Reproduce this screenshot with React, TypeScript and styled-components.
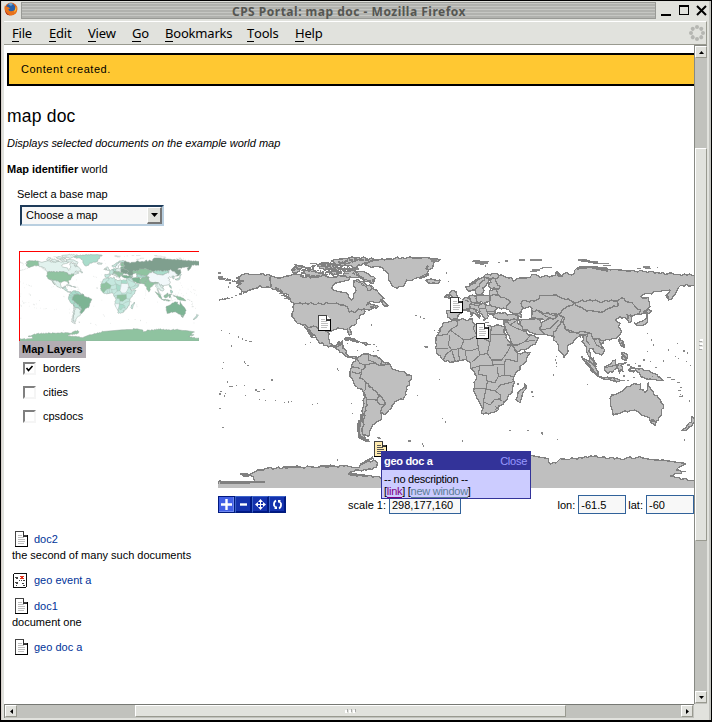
import React from "react";
import styled, { createGlobalStyle, css } from "styled-components";

const Global = createGlobalStyle`
  *{box-sizing:border-box}
  html,body,#root{margin:0;width:712px;height:722px;overflow:hidden}
  body{font:11px/14px "Liberation Sans",Arial,sans-serif;color:#000;background:#fff}
  svg{display:block;flex:none}
`;

/* ---------- world geometry: points in thirds of a map pixel ---------- */
type Land = { at: [number, number]; p: string; tint?: string };
const AM: [number, number] = [210, 245];
const EA: [number, number] = [430, 245];
const SO: [number, number] = [330, 360];
const SW: [number, number] = [210, 340];
const green = "#8fc3a0", deep = "#7db494", dark = "#7f9f8e", mint = "#a9dccb", pale = "#e2f2ee", ice = "#f1f8fa", soft = "#c5e8df";

const lands: Land[] = [
  { at: AM, tint: green, p: "80,125 88,118 78,110 100,108 80,98 95,90 110,85 150,88 182,92 182,128 165,128 150,122 138,130 120,135 105,142 90,130" },
  { at: AM, tint: pale, p: "182,92 215,98 240,92 265,88 285,98 320,98 345,92 372,96 385,92 420,98 415,106 395,110 370,120 365,130 385,140 415,148 418,160 424,165 430,148 438,136 430,122 432,108 444,102 470,122 484,122 490,134 505,142 512,150 522,160 500,172 480,170 470,180 490,180 505,185 485,192 462,192 440,198 418,202 412,185 400,180 372,176 255,176 240,165 228,145 205,135 182,128" },
  { at: AM, tint: green, p: "255,176 372,176 400,180 412,185 418,202 440,198 462,192 465,200 450,210 440,225 440,235 420,248 418,250 425,268 418,270 412,252 390,250 370,255 352,260 345,257 330,248 318,245 290,244 275,238 262,235 252,220 246,205 248,185" },
  { at: AM, tint: pale, p: "275,238 290,244 318,245 330,248 345,258 352,260 356,280 365,298 380,300 385,290 398,288 395,298 380,305 370,306 350,302 325,288 315,270 300,256 290,250 312,278 300,270 285,248" },
  { at: AM, tint: soft, p: "370,306 382,304 396,296 398,310 410,318 412,330 425,338 440,336 432,342 415,338 400,325 385,314" },
  { at: AM, tint: mint, p: "455,52 480,50 500,45 540,42 600,36 640,38 690,44 670,52 668,70 655,75 655,90 640,98 615,100 590,105 577,125 562,130 545,120 535,95 528,78 510,66 475,62" },
  { at: AM, tint: pale, p: "400,75 440,80 470,85 495,100 490,115 465,110 450,95 420,96 400,90" },
  { at: AM, tint: pale, p: "275,84 310,72 330,85 345,92 300,95" },
  { at: AM, tint: pale, p: "365,48 420,38 492,42 460,55 430,68 412,62 380,62" },
  { at: AM, tint: pale, p: "245,75 258,62 280,66 268,80 250,84" },
  { at: AM, tint: pale, p: "322,60 345,54 372,60 398,72 362,74 330,70" },
  { at: AM, tint: pale, p: "350,80 378,76 388,84 368,92" },
  { at: AM, p: "466,124 480,120 486,130 474,136" },
  { at: AM, p: "648,106 665,102 690,105 688,112 665,115" },
  { at: AM, p: "402,282 420,279 448,290 435,289 420,284" },
  { at: AM, p: "452,293 468,292 482,299 466,301" },
  { at: AM, p: "514,170 524,170 535,182 520,182" },
  { at: EA, tint: dark, p: "195,100 215,90 245,98 250,108 262,100 300,98 305,90 340,95 375,92 380,80 395,95 410,82 425,90 440,70 490,65 540,75 600,78 660,80 690,85 740,88 793,92 806,98 806,120 793,122 770,118 745,128 735,150 715,165 708,150 720,135 690,140 640,148 632,155 655,158 660,185 640,205 622,208 632,195 612,180 575,158 560,168 520,170 480,165 435,172 400,160 370,150 330,152 320,165 275,170 280,190 265,205 240,200 228,192 242,172 215,158 205,150 200,135 210,125" },
  { at: EA, tint: soft, p: "108,125 125,118 140,105 165,90 195,85 215,90 195,100 165,98 150,115 135,135 115,138" },
  { at: EA, tint: ice, p: "135,135 150,115 165,98 178,105 170,118 158,128 162,138 150,150 140,148" },
  { at: EA, tint: green, p: "178,105 195,100 210,125 200,132 182,132 176,122 184,112" },
  { at: EA, tint: soft, p: "84,166 100,162 112,158 125,168 120,190 105,195 85,195 92,178" },
  { at: EA, tint: mint, p: "112,158 120,152 140,152 145,160 140,175 125,172" },
  { at: EA, tint: pale, p: "140,152 180,152 182,170 160,175 140,168" },
  { at: EA, tint: deep, p: "178,138 200,135 205,150 180,154" },
  { at: EA, tint: soft, p: "50,198 85,198 98,202 85,210 82,220 65,224 52,218" },
  { at: EA, tint: pale, p: "58,160 68,154 58,144 66,136 78,140 80,150 90,160 70,164" },
  { at: EA, p: "43,158 48,150 58,150 56,160" },
  { at: EA, tint: dark, p: "182,152 205,150 215,158 242,172 228,192 200,190 180,180" },
  { at: EA, tint: green, p: "125,172 160,175 180,180 200,190 195,205 180,207 172,204 175,215 165,222 158,214 150,205 135,192 120,188" },
  { at: EA, p: "108,196 120,190 132,192 140,202 152,212 148,220 135,206 118,198" },
  { at: EA, tint: deep, p: "188,209 215,205 250,208 265,215 262,225 235,225 200,220" },
  { at: EA, tint: soft, p: "240,200 265,205 275,215 265,215 250,208" },
  { at: EA, tint: green, p: "275,170 320,165 330,152 370,150 400,160 435,172 425,182 405,190 395,205 360,208 340,205 320,195 305,198 300,185 285,190 275,182" },
  { at: EA, tint: mint, p: "305,198 320,195 340,205 360,208 385,208 370,222 345,228 330,222 305,218" },
  { at: EA, tint: deep, p: "262,215 275,225 300,222 325,222 335,235 330,255 345,268 320,268 300,262 285,255 270,240" },
  { at: EA, tint: green, p: "335,235 345,228 370,222 385,208 400,215 390,240 370,262 372,275 345,268 330,255" },
  { at: EA, tint: mint, p: "435,172 480,165 520,170 560,168 565,180 545,188 510,202 470,198 445,185" },
  { at: EA, tint: ice, p: "435,172 445,185 470,198 510,202 545,188 565,180 560,168 575,158 612,180 632,195 622,208 600,210 590,222 570,215 555,225 570,235 565,245 575,260 565,275 540,285 520,288 505,280 490,282 475,262 450,260 430,262 405,252 400,215 385,208 405,190 425,182" },
  { at: EA, tint: green, p: "400,215 405,252 430,262 450,260 475,262 465,270 445,275 432,285 412,305 412,325 402,338 390,320 382,295 370,285 372,275 370,262 390,240" },
  { at: EA, tint: pale, p: "465,270 475,262 490,282 505,280 520,288 512,298 525,315 515,330 500,326 490,312 480,310 482,335 492,348 497,364 484,352 474,330 470,305 455,290" },
  { at: EA, tint: soft, p: "590,208 602,212 605,230 597,232" },
  { at: EA, tint: soft, p: "612,234 638,228 652,210 652,232 628,242" },
  { at: EA, tint: soft, p: "646,196 664,198 653,207" },
  { at: EA, tint: soft, p: "228,225 262,225 270,240 290,264 305,270 325,278 315,298 290,312 262,320 250,300 232,265 222,240" },
  { at: EA, tint: soft, p: "45,232 80,225 128,222 135,238 160,245 195,242 225,245 222,262 240,292 256,318 264,325 300,322 290,342 262,378 252,395 250,420 245,445 222,470 215,480 190,503 160,508 145,465 132,430 140,395 122,368 120,352 100,345 60,352 40,345 20,322 18,285 30,250" },
  { at: SO, tint: soft, p: "564,96 578,86 585,72 587,88 570,128 558,118" },
  { at: EA, tint: green, p: "525,365 545,352 556,345 562,362 548,382 528,380" },
  { at: EA, tint: green, p: "455,334 478,350 500,374 508,395 488,382 470,358" },
  { at: SO, tint: green, p: "806,50 840,54 870,60 868,65 822,58" },
  { at: SO, tint: green, p: "865,10 888,8 872,16 882,36 872,30 868,40 863,24" },
  { at: SO, tint: green, p: "900,18 918,26 960,34 984,50 1000,62 974,58 954,58 932,50 920,34" },
  { at: EA, tint: mint, p: "568,278 580,290 584,308 574,302" },
  { at: EA, tint: mint, p: "575,322 592,330 590,345 576,340" },
  { at: SO, tint: deep, p: "840,115 845,105 880,90 905,75 932,72 930,88 946,98 955,68 965,90 985,115 1000,135 995,165 985,180 960,182 950,170 935,165 920,154 900,152 870,160 850,165 845,145" },
  { at: SO, tint: deep, p: "960,186 980,186 975,198" },
  { at: SO, tint: soft, p: "1056,212 1072,195 1084,186 1086,170 1100,178 1088,192 1066,212" },
  { at: SW, tint: mint, p: "425,75 440,55 455,45 475,42 500,48 515,62 540,72 515,75 490,70 465,75 455,98 450,115 468,128 460,155 440,140 425,115 420,95" },
  { at: SW, tint: deep, p: "465,75 490,70 515,75 540,72 548,88 580,95 605,108 605,118 590,140 588,165 580,178 555,185 545,205 525,225 512,215 525,195 515,170 490,150 468,128 450,115 455,98" },
  { at: SW, tint: mint, p: "468,128 490,150 515,170 525,195 508,192 500,180 470,178 460,155" },
  { at: SW, tint: pale, p: "470,178 500,180 508,192 525,195 512,215 515,238 495,250 480,270 475,290 460,285 455,270 462,235" },
  { at: SW, tint: ice, p: "460,155 470,178 462,235 455,270 460,285 475,300 460,300 445,290 448,265 456,240 462,190" },
  { at: SW, tint: green, p: "24,425 85,428 135,425 130,410 96,405 125,400 165,386 245,382 330,380 400,378 440,382 465,368 490,360 502,368 498,382 470,390 445,390 430,395 415,402 450,406 480,406 530,418 600,395 700,368 850,355 960,348 1015,357 1022,372 1060,357 1150,350 1230,356 1290,350 1360,360 1428,372 1398,390 1425,395 1382,408 1452,422 1464,422 1464,446 24,446" },
];

const africaBorders = "80,225 84,240 60,255 52,268 22,272 M60,255 102,285 120,283 140,272 130,250 134,238 M140,272 180,290 184,244 M180,268 228,270 M180,290 172,325 185,345 215,345 230,325 244,298 M102,285 92,310 65,315 55,300 60,270 M92,310 105,315 110,345 M140,272 145,310 120,318 105,315 M145,310 150,330 172,325 M150,330 125,352 M185,345 190,360 222,358 228,342 M228,342 262,350 262,325 M190,360 150,362 125,370 M150,362 145,388 168,392 172,410 195,412 205,395 202,365 M222,358 225,390 205,395 M225,390 252,395 M134,430 168,432 172,410 M168,432 195,438 212,420 250,410 M168,432 160,470 180,480 195,462 212,465 212,450 195,438 M160,470 160,492 M18,310 55,310 M40,345 48,328 65,315 M65,315 76,350 M85,312 88,346 M205,460 216,468 M195,485 204,488 196,494";
const asiaBorders = "120,178 145,182 160,175 M145,182 150,200 M165,178 170,200 M170,200 195,198 M150,190 165,192 M105,165 118,170 M118,152 122,170 M228,225 240,240 262,225 M240,240 260,250 290,262 M232,300 262,300 285,290 315,285 M285,290 300,272 M330,255 360,250 385,225 M475,262 468,285 480,300 M490,282 500,300 520,312 M505,280 512,298 M405,252 425,258 450,268 M445,262 452,280 M525,368 560,360 M255,205 275,218 M320,195 350,215 372,222 M365,210 385,215";
const southBorders = "440,55 450,70 465,75 M475,42 475,60 500,70 M515,62 512,75 M527,68 525,76 M425,95 440,100 455,98 M425,80 450,85 M500,180 508,165 515,170 M512,215 525,225";
const specks: [number, number, string][] = [
  [210, 245, "24,84h8 24,96h14 26,102h18 44,106h12 58,114h6 28,164h16 46,160h14 64,157h6 74,152h8 88,147h8 100,141h10 200,138h12 206,145h14 212,151h14 222,160h12 54,126h3 34,256h3 56,266h3 84,276h3 96,282h4 106,286h6 118,290h7 64,303h3 300,293h3 286,298h3 484,240h3 616,212h5 630,216h4 640,220h5 672,256h4 680,262h5 642,304h12 646,308h8 103,351h3 112,362h5 380,372h5 384,376h3 708,84h3 714,110h3 410,295h5 440,287h4 488,298h6 498,305h4 500,316h6 440,316h3 488,320h5 278,68h20 300,55h22 320,64h22 344,70h30 390,55h20 286,90h15 420,72h26 398,86h20 318,83h20 252,58h8"],
  [430, 245, "0,43h25 4,48h18 126,50h50 135,54h40 150,58h12 165,63h4 130,47h20 205,52h4 226,48h8 266,45h20 300,45h35 335,67h30 305,75h24 300,80h20 330,70h10 445,45h25 454,50h50 500,56h36 520,62h22 510,68h20 620,70h12 640,66h20 645,70h18 680,68h4 112,200h3 122,206h5 120,214h6 158,225h7 166,232h12 220,231h10 374,325h2 378,335h3 376,345h2 378,354h3 378,365h2 652,265h3 664,285h3 668,300h3 650,320h4 740,295h3 760,318h5 770,324h5 736,334h3 640,345h4 660,350h3 700,348h3 745,340h3 768,350h4 780,362h4 715,315h3 20,200h2 12,257h4 24,256h4"],
  [210, 340, "38,68h3 36,86h4 104,70h3 112,76h6 50,126h5 56,140h12 30,155h5 26,162h8 44,160h4 42,168h4 78,136h3 102,136h3 136,150h5 142,154h8 160,148h4 184,120h5 104,166h3 146,178h3 164,182h3 194,182h3 222,187h4 234,186h3 242,184h4 306,193h3 322,190h3 28,206h4 36,262h6 424,190h3 426,220h4 686,118h3 622,166h3 696,235h3 706,246h3 500,292h10 504,296h8 594,303h8 636,312h4 640,318h3 380,360h3 468,305h12 446,285h8 450,290h10"],
  [330, 360, "336,175h3 345,185h3 538,212h4 590,212h6 632,219h8 636,222h4 682,238h3 396,243h4 606,110h5 604,96h5 562,72h6 668,45h4 770,73h4 848,65h8 870,62h14 890,62h8 1010,52h12 1024,58h10 1040,68h10 1050,82h6 1044,92h8 1050,104h4 1046,110h12 1056,108h4 915,10h4 925,18h8 975,22h6 965,50h4 1076,123h4 1062,240h4 890,15h10 896,26h8 878,48h8 910,52h5"],
];

// Adds a small bend in each edge; a shared edge bends alike from both sides.
function rough(s: string, amount: number) {
  const pts = s.trim().split(/\s+/).map((q) => q.split(",").map(Number));
  const out: string[] = [];
  pts.forEach((a, i) => {
    const b = pts[(i + 1) % pts.length];
    out.push(a.join(","));
    const dx = b[0] - a[0], dy = b[1] - a[1], len = Math.hypot(dx, dy);
    const n = len < 150 ? Math.max(1, Math.round(len / 8)) : 1;
    const flip = a[0] < b[0] || (a[0] === b[0] && a[1] < b[1]) ? 1 : -1;
    for (let k = 1; k < n; k++) {
      const idx = flip > 0 ? k : n - k;
      const h = Math.sin((a[0] + b[0]) * 12.9 + (a[1] + b[1]) * 78.2 + idx * 37.7) * 43758.5;
      const off = (h - Math.floor(h) - 0.5) * amount * flip;
      out.push(`${(a[0] + (dx * k) / n - (dy / len) * off).toFixed(1)},${(a[1] + (dy * k) / n + (dx / len) * off).toFixed(1)}`);
    }
  });
  return "M" + out.join("L") + "Z";
}
const place = ([x, y]: [number, number]) => `translate(${x} ${y}) scale(.333333)`;
const line = (s: string) => "M" + s;
const dots = (s: string) => s.split(" ").map((q) => "M" + q).join("");

const World = ({ tinted }: { tinted?: boolean }) => (
  <svg width={tinted ? 180 : 480} height={tinted ? 90 : 240} viewBox="218 248 480 240" shapeRendering={tinted ? "auto" : "crispEdges"}>
    {lands.map((l, i) => (
      <path key={i} transform={place(l.at)} d={rough(l.p, 8)} fill={tinted ? l.tint || "#dcebe7" : "#bfbfbf"} stroke={tinted ? "#94a69e" : "#808080"} strokeWidth={4} strokeLinejoin="round" />
    ))}
    {tinted && <g transform={place(EA)}>
      <path fill={green} d="M22,272L52,268 60,255 102,285 92,310 65,315 40,345 18,315Z M190,360L150,362 145,388 168,392 172,410 195,412 225,390 222,358Z" />
      <path fill={ice} d="M180,290L172,325 185,345 215,345 230,325 240,292 228,270 180,268Z M132,430L168,432 160,480 145,465Z" />
      <path fill={mint} d="M184,244L222,246 228,270 182,268Z M168,432L195,438 212,450 195,462 180,480 160,470Z M145,310L140,272 172,290 172,325 150,330Z" />
    </g>}
    <g fill="none" stroke={tinted ? "#a3b5ad" : "#808080"} strokeWidth="3.3">
      <path transform={place(EA)} d={line(africaBorders)} />
      <path transform={place(EA)} d={line(asiaBorders)} />
      <path transform={place(SW)} d={line(southBorders)} />
      {specks.map(([x, y, s], i) => <path key={i} transform={place([x, y])} d={dots(s)} stroke={tinted ? "#b5c0bb" : "#888"} />)}
    </g>
    {!tinted && <g fill="none" stroke="#808080" strokeWidth="7" transform={place(AM)}>
      <path d="M78,98l14,5 -12,8 14,6M195,128l15,8 10,14 16,8M245,78l16,-8 20,6 30,-10M358,54l20,8 40,-18 60,2M355,84l18,-8 30,10 M400,70l35,8 12,12 M270,94l60,-1M654,62l-6,14 M406,282l30,6 M480,185l22,4M470,108l24,-2M295,252l14,22M380,296l12,3M222,150l20,14M446,92l18,14M656,86l-24,12M512,164l10,4M334,62l30,0" strokeDasharray="13 3" />
      <path strokeWidth="5" strokeDasharray="7 3 4 2" d="M255,66l24,-4 16,12M282,78l24,-14 30,-8 20,8M304,80l20,-4 26,8 14,-18M332,58l30,14 24,-8M366,64l36,14 22,-8M384,50l26,6 40,-12M346,90l20,-4 28,-2M404,58l18,14 22,-6M428,84l30,14 20,12M430,106l20,6 14,12M24,98l26,4 28,8M26,165l32,-6M90,146l22,-6" />
      <path transform="translate(0 285)" d="M447,240l-3,28 6,22 22,12M455,222l-3,20" />
      <path transform="translate(660 0)" d="M380,82l10,14M440,71l40,-5 54,11M118,120l30,-20M708,150l8,12M488,338l10,30M455,45l50,10M575,290l8,16 M575,325l14,16M122,204l5,8M468,350l30,38M594,375l20,5M640,198l12,8" />
      <path transform="translate(0 285)" d="M220,382h50M330,378h40M455,372l35,-20M90,402l30,3M140,390l22,0M415,402l50,4M164,426l-84,2 -50,0" />
    </g>}
  </svg>
);

/* ---------- icons ---------- */
const DocIcon = ({ fill = "#fff", heavy }: { fill?: string; heavy?: boolean }) => (
  <svg width="13" height="16" viewBox="0 0 13 16" shapeRendering="crispEdges">
    <path d="M0 0H9V1H10V2H11V3H12V4H13V16H0Z" fill="#444" />
    <path d="M1 1H8V5H12V15H1Z" fill={fill} />
    <path d="M9 1v3h3v-1h-1v-1h-1v-1z" fill="#fff" />
    <path d="M8 1v4h4" fill="none" stroke="#333" />
    <path d="M3 4.5h4M3 6.5h6M3 8.5h7M3 10.5h7M3 12.5h6" stroke={heavy ? "#555" : "#c0c0c0"} />
    <path d="M12.5 4V15.5H0" fill="none" stroke="#000" />
  </svg>
);
const EventIcon = () => (
  <svg width="14" height="15" viewBox="0 0 14 15" shapeRendering="crispEdges">
    <rect x=".5" y=".5" width="13" height="14" rx="1.5" fill="#fff" stroke="#111" />
    <path d="M2 4h3M3 5h2M2 9h3M3 10h2M9 10h2M10 12h2M6 7h1M8 7h1M10 7h2M3 12h1" stroke="#444" />
    <path d="M7 3l4 3M11 3l-4 3" stroke="#e53118" strokeWidth="1.3" />
  </svg>
);
const FirefoxIcon = () => (
  <svg width="14" height="14" viewBox="0 0 14 14">
    <circle cx="7" cy="7" r="6.4" fill="#e2641b" />
    <circle cx="6.6" cy="6" r="4.6" fill="#2860a8" />
    <path d="M4 2q3-2 5 0l-2 2z" fill="#63a4d6" />
    <path d="M.8 3.6L2 4.5 4.2 5 6 6.4 4.2 7.5Q6 10.5 10 8.6 13 6.5 11.6 2.8 14.5 7 12 11.2 8.5 14.4 4 12.8 0 10 .8 3.6Z" fill="#e8731c" />
    <path d="M12 4q1.2 4-2 6.5Q11.5 7 12 4Z" fill="#fbd13b" />
    <path d="M1.2 8q1 4 5 5.2-5 .3-5-5.2Z" fill="#a92a1c" />
  </svg>
);

/* ---------- window frame ---------- */
const Window = styled.div`width:712px;height:722px;background:#e1e2dd;border:1px solid #000;border-width:1px 1px 2px 1px;padding:1px 4px 2px 2px;display:flex;flex-direction:column;box-shadow:inset 1px 0 #d8d0cb,inset -2px 0 #c1c2bd;`;
const TitleBar = styled.div`height:19px;flex:none;display:flex;align-items:flex-start;padding-left:1px;`;
const Grip = styled.div`flex:1;margin-left:3px;height:17px;border:1px solid #999a96;background:repeating-linear-gradient(#c6c7c3 0 1px,#b1b2ae 1px 3px);text-align:center;font:bold 12px/18px "Noto Sans","Open Sans",sans-serif;color:#555652;white-space:pre;padding-left:21px;letter-spacing:.5px;`;
const Controls = styled.div`width:51px;height:17px;padding:2px 0 0 5px;display:flex;`;
const MenuBar = styled.div`height:24px;flex:none;margin-left:1px;border-top:1px solid #fff;border-bottom:1px solid #999a90;border-right:1px solid #999a90;display:flex;align-items:center;padding:0 1px 0 8px;font:13px/18px "Noto Sans","Open Sans",sans-serif;`;
const MenuCell = styled.span<{ $w: number }>`width:${(p) => p.$w}px;flex:none;white-space:nowrap;letter-spacing:-.2px;`;
const Mnemonic = styled.span`display:inline-block;line-height:15px;height:16px;border-bottom:1px solid #000;`;
const Throbber = styled.div`margin-left:auto;`;
const Body = styled.div`display:flex;height:659px;flex:none;margin-left:1px;`;
const View = styled.main`width:690px;height:659px;background:#fff;overflow:hidden;flex:none;`;
const VScroll = styled.div`width:13px;height:659px;border-left:1px solid #888a84;border-top:1px solid #888a84;background:#c1c2bd;display:flex;flex-direction:column;`;
const HScroll = styled.div`flex:none;margin-left:1px;width:690px;height:14px;border-top:1px solid #777974;border-left:1px solid #888a84;background:#c1c2bd;display:flex;`;
const bevel = css`border:1px solid #999a90;border-top-color:#fff;border-left-color:#fff;background:#e1e2dd;`;
const Arrow = styled.div`${bevel} width:12px;height:12px;flex:none;display:grid;place-items:center;`;
const Thumb = styled.div<{ $w?: number; $h?: number }>`${bevel} width:${(p) => p.$w ?? 12}px;height:${(p) => p.$h ?? 12}px;flex:none;display:grid;place-items:center;`;
const Gap = styled.div<{ $n: number }>`flex:0 0 ${(p) => p.$n}px;`;

/* ---------- page ---------- */
const Banner = styled.div`margin:8px 0 0 3px;height:33px;border:2px solid #000;border-right:0;background:#ffc832;padding-left:12px;line-height:29px;letter-spacing:.53px;`;
const Title = styled.h1`margin:20px 0 0 3px;font-size:17.5px;font-weight:400;line-height:20px;letter-spacing:.2px;`;
const Lead = styled.p`margin:10px 0 0 3px;height:14px;font-style:italic;letter-spacing:-.025px;`;
const Ident = styled.p`margin:12px 0 0 3px;height:14px;b{letter-spacing:-.02px}`;
const Label = styled.div`margin:11px 0 0 13px;letter-spacing:-.03px;`;
const Select = styled.div`margin:4px 0 0 16px;width:144px;height:21px;border:2px solid #b9cfe0;border-color:#1e3b59 #b9cfe0 #b9cfe0 #1e3b59;background:#f8f8f8;display:flex;align-items:center;justify-content:space-between;padding:0 0 0 4px;line-height:15px;`;
const DropButton = styled.div`width:15px;height:17px;border:1px solid #fff;border-right:2px solid #777;border-bottom:2px solid #777;background:#e1e2dd;display:grid;place-items:center;`;
const MapRow = styled.section`display:flex;height:274px;margin-top:22px;padding-left:15px;`;
const Side = styled.div`width:199px;flex:none;padding-top:3px;`;
const Mini = styled.div`width:180px;height:90px;border-top:1px solid #f00;border-left:1px solid #f00;overflow:hidden;svg{margin:-1px 0 0 -1px}`;
const LayersTitle = styled.div`width:67px;height:17px;background:#b3adb3;font-weight:bold;line-height:17px;padding-left:3px;`;
const Layer = styled.label<{ $top?: number }>`display:flex;align-items:center;height:14px;margin:${(p) => p.$top ?? 10}px 0 0 4px;gap:7px;`;
const Box = styled.span`width:13px;height:13px;border:2px solid #f5f5f5;border-top-color:#808080;border-left-color:#808080;background:#fff;`;
const MapPane = styled.div`width:480px;position:relative;flex:none;`;
const Pin = styled.div<{ $x: number; $y: number }>`position:absolute;left:${(p) => p.$x}px;top:${(p) => p.$y}px;`;
const Tools = styled.div`display:flex;height:19px;margin-top:7px;width:476px;`;
const Tool = styled.div<{ $on?: boolean }>`flex:none;width:17px;height:17px;margin-top:1px;display:grid;place-items:center;border:1px solid #001b7c;border-top-color:${(p) => (p.$on ? "#001880" : "#3c63c8")};border-left-color:${(p) => (p.$on ? "#001880" : "#3c63c8")};background:${(p) => (p.$on ? "#4260e5" : "#1432ad")};box-shadow:inset -1px -1px ${(p) => (p.$on ? "#7089f0" : "#001987")};`;
const Field = styled.label`display:flex;align-items:center;justify-content:flex-end;white-space:nowrap;`;
const FieldGroup = styled.div`margin-left:auto;display:flex;gap:2px;`;
const ScaleSlot = styled.div`width:175px;display:flex;justify-content:flex-end;`;
const Input = styled.span<{ $w: number }>`width:${(p) => p.$w}px;flex:none;height:19px;margin-left:3px;border:1px solid #31629a;background:#f8f8f8;padding-left:2px;line-height:18px;`;
const Popup = styled.div`position:absolute;left:163px;top:203px;width:150px;height:48px;border:1px solid #333399;background:#ccccff;`;
const PopupHead = styled.div`height:18px;background:#333399;color:#fff;display:flex;justify-content:space-between;padding:0 3px 0 2px;line-height:18px;b{letter-spacing:-.3px}span{color:#9999ff;letter-spacing:-.25px}`;
const PopupBody = styled.div`padding:3px 2px 0;line-height:12px;white-space:pre;letter-spacing:-.27px;`;
const Link = styled.a<{ $c: string }>`color:${(p) => p.$c};border-bottom:1px solid ${(p) => p.$c};`;
const List = styled.div`padding:9px 0 0 8px;`;
const Item = styled.div<{ $after: number }>`display:flex;align-items:center;height:16px;color:#003399;margin-bottom:${(p) => p.$after}px;`;
const IconSlot = styled.span<{ $pad: number }>`width:22px;padding-left:${(p) => p.$pad}px;`;
const Note = styled.div<{ $after: number }>`height:14px;margin-top:1px;margin-bottom:${(p) => p.$after}px;`;

const Tri = ({ d }: { d: string }) => <svg width="7" height="7" viewBox="0 0 7 7"><path d={d} fill="#000" /></svg>;
const MenuItem = ({ w, label }: { w: number; label: string }) => <MenuCell $w={w}><Mnemonic>{label[0]}</Mnemonic>{label.slice(1)}</MenuCell>;

export default function App() {
  return (
    <>
      <Global />
      <Window>
        <TitleBar>
          <FirefoxIcon />
          <Grip>CPS Portal: map doc - Mozilla Firefox</Grip>
          <Controls>
            <svg width="46" height="14" viewBox="0 0 46 14" shapeRendering="crispEdges">
              <path d="M0 11h10" stroke="#000" strokeWidth="2" />
              <path d="M18.5 1.5h9v9h-9zM18 2h10" stroke="#000" fill="none" />
              <path d="M36 2l9 9M45 2l-9 9" stroke="#000" strokeWidth="2" shapeRendering="auto" />
            </svg>
          </Controls>
        </TitleBar>
        <MenuBar>
          <MenuItem w={37} label="File" /><MenuItem w={39} label="Edit" /><MenuItem w={44} label="View" />
          <MenuItem w={33} label="Go" /><MenuItem w={82} label="Bookmarks" /><MenuItem w={48} label="Tools" /><MenuItem w={40} label="Help" />
          <Throbber>
            <svg width="16" height="16" viewBox="0 0 16 16" fill="#b5b6b2">
              {[0, 45, 90, 135, 180, 225, 270, 315].map((a) => <circle key={a} cx="8" cy="2" r="2" transform={`rotate(${a} 8 8)`} />)}
            </svg>
          </Throbber>
        </MenuBar>
        <Body>
          <View>
            <Banner>Content created.</Banner>
            <Title>map doc</Title>
            <Lead>Displays selected documents on the example world map</Lead>
            <Ident><b>Map identifier</b> world</Ident>
            <Label>Select a base map</Label>
            <Select>Choose a map<DropButton><svg width="7" height="4" viewBox="0 0 7 4"><path d="M0 0h7L3.5 4z" /></svg></DropButton></Select>
            <MapRow>
              <Side>
                <Mini><World tinted /></Mini>
                <LayersTitle>Map Layers</LayersTitle>
                <Layer $top={3}><Box><svg width="9" height="9" viewBox="0 0 9 9"><path d="M1.5 4l2 2.5 4-4.5" fill="none" stroke="#000" strokeWidth="1.6" /></svg></Box>borders</Layer>
                <Layer><Box />cities</Layer>
                <Layer><Box />cpsdocs</Layer>
              </Side>
              <MapPane>
                <World />
                <Pin $x={100} $y={67}><DocIcon /></Pin>
                <Pin $x={232} $y={49}><DocIcon /></Pin>
                <Pin $x={258} $y={75}><DocIcon /></Pin>
                <Pin $x={156} $y={193}><DocIcon fill="#ffebb0" heavy /></Pin>
                <Tools>
                  <Tool $on><svg width="11" height="11"><path d="M5.5 0v11M0 5.5h11" stroke="#fff" strokeWidth="2.4" /></svg></Tool>
                  <Tool><svg width="11" height="11"><path d="M2 5.5h7" stroke="#fff" strokeWidth="2.4" /></svg></Tool>
                  <Tool><svg width="11" height="11" viewBox="0 0 11 11"><path d="M5.5 1v9M1 5.5h9" stroke="#fff" /><path d="M5.5 0L8 3H3zM5.5 11L8 8H3zM0 5.5L3 3v5zM11 5.5L8 3v5z" fill="#fff" /></svg></Tool>
                  <Tool><svg width="11" height="11" viewBox="0 0 11 11"><path d="M4 1.5Q1.5 3 2 6.5l2 2.5M7 9.5Q9.5 8 9 4.5L7 2" fill="none" stroke="#fff" strokeWidth="1.7" /><path d="M2 10h3V7zM9 1H6v3z" fill="#fff" /></svg></Tool>
                  <ScaleSlot><Field>scale 1:<Input $w={72}>298,177,160</Input></Field></ScaleSlot>
                  <FieldGroup>
                    <Field>lon:<Input $w={48}>-61.5</Input></Field>
                    <Field>lat:<Input $w={48}>-60</Input></Field>
                  </FieldGroup>
                </Tools>
                <Popup>
                  <PopupHead><b>geo doc a</b><span>Close</span></PopupHead>
                  <PopupBody>-- no description --{"\n"}[<Link $c="#800080">link</Link>] [<Link $c="#5a7d94">new window</Link>]</PopupBody>
                </Popup>
              </MapPane>
            </MapRow>
            <List>
              <Item $after={0}><IconSlot $pad={3}><DocIcon /></IconSlot>doc2</Item>
              <Note $after={10}>the second of many such documents</Note>
              <Item $after={10}><IconSlot $pad={1}><EventIcon /></IconSlot>geo event a</Item>
              <Item $after={0}><IconSlot $pad={3}><DocIcon /></IconSlot>doc1</Item>
              <Note $after={10}>document one</Note>
              <Item $after={0}><IconSlot $pad={3}><DocIcon /></IconSlot>geo doc a</Item>
            </List>
          </View>
          <VScroll>
            <Arrow><Tri d="M1 5h5L3.5 2z" /></Arrow>
            <Gap $n={90} />
            <Thumb $h={393}><svg width="4" height="11"><path d="M1 1h3M1 5h3M1 9h3" stroke="#fff" strokeWidth="2" /><path d="M0 2.5h3M0 6.5h3M0 10.5h3" stroke="#aaa" /></svg></Thumb>
            <Gap $n={150} />
            <Arrow><Tri d="M1 2h5L3.5 5z" /></Arrow>
          </VScroll>
        </Body>
        <HScroll>
          <Arrow><Tri d="M5 1v5L2 3.5z" /></Arrow>
          <Gap $n={118} />
          <Thumb $w={431}><svg width="11" height="4"><path d="M1 1v3M5 1v3M9 1v3" stroke="#fff" strokeWidth="2" /><path d="M2.5 0v3M6.5 0v3M10.5 0v3" stroke="#aaa" /></svg></Thumb>
          <Gap $n={115} />
          <Arrow><Tri d="M2 1v5L5 3.5z" /></Arrow>
        </HScroll>
      </Window>
    </>
  );
}
